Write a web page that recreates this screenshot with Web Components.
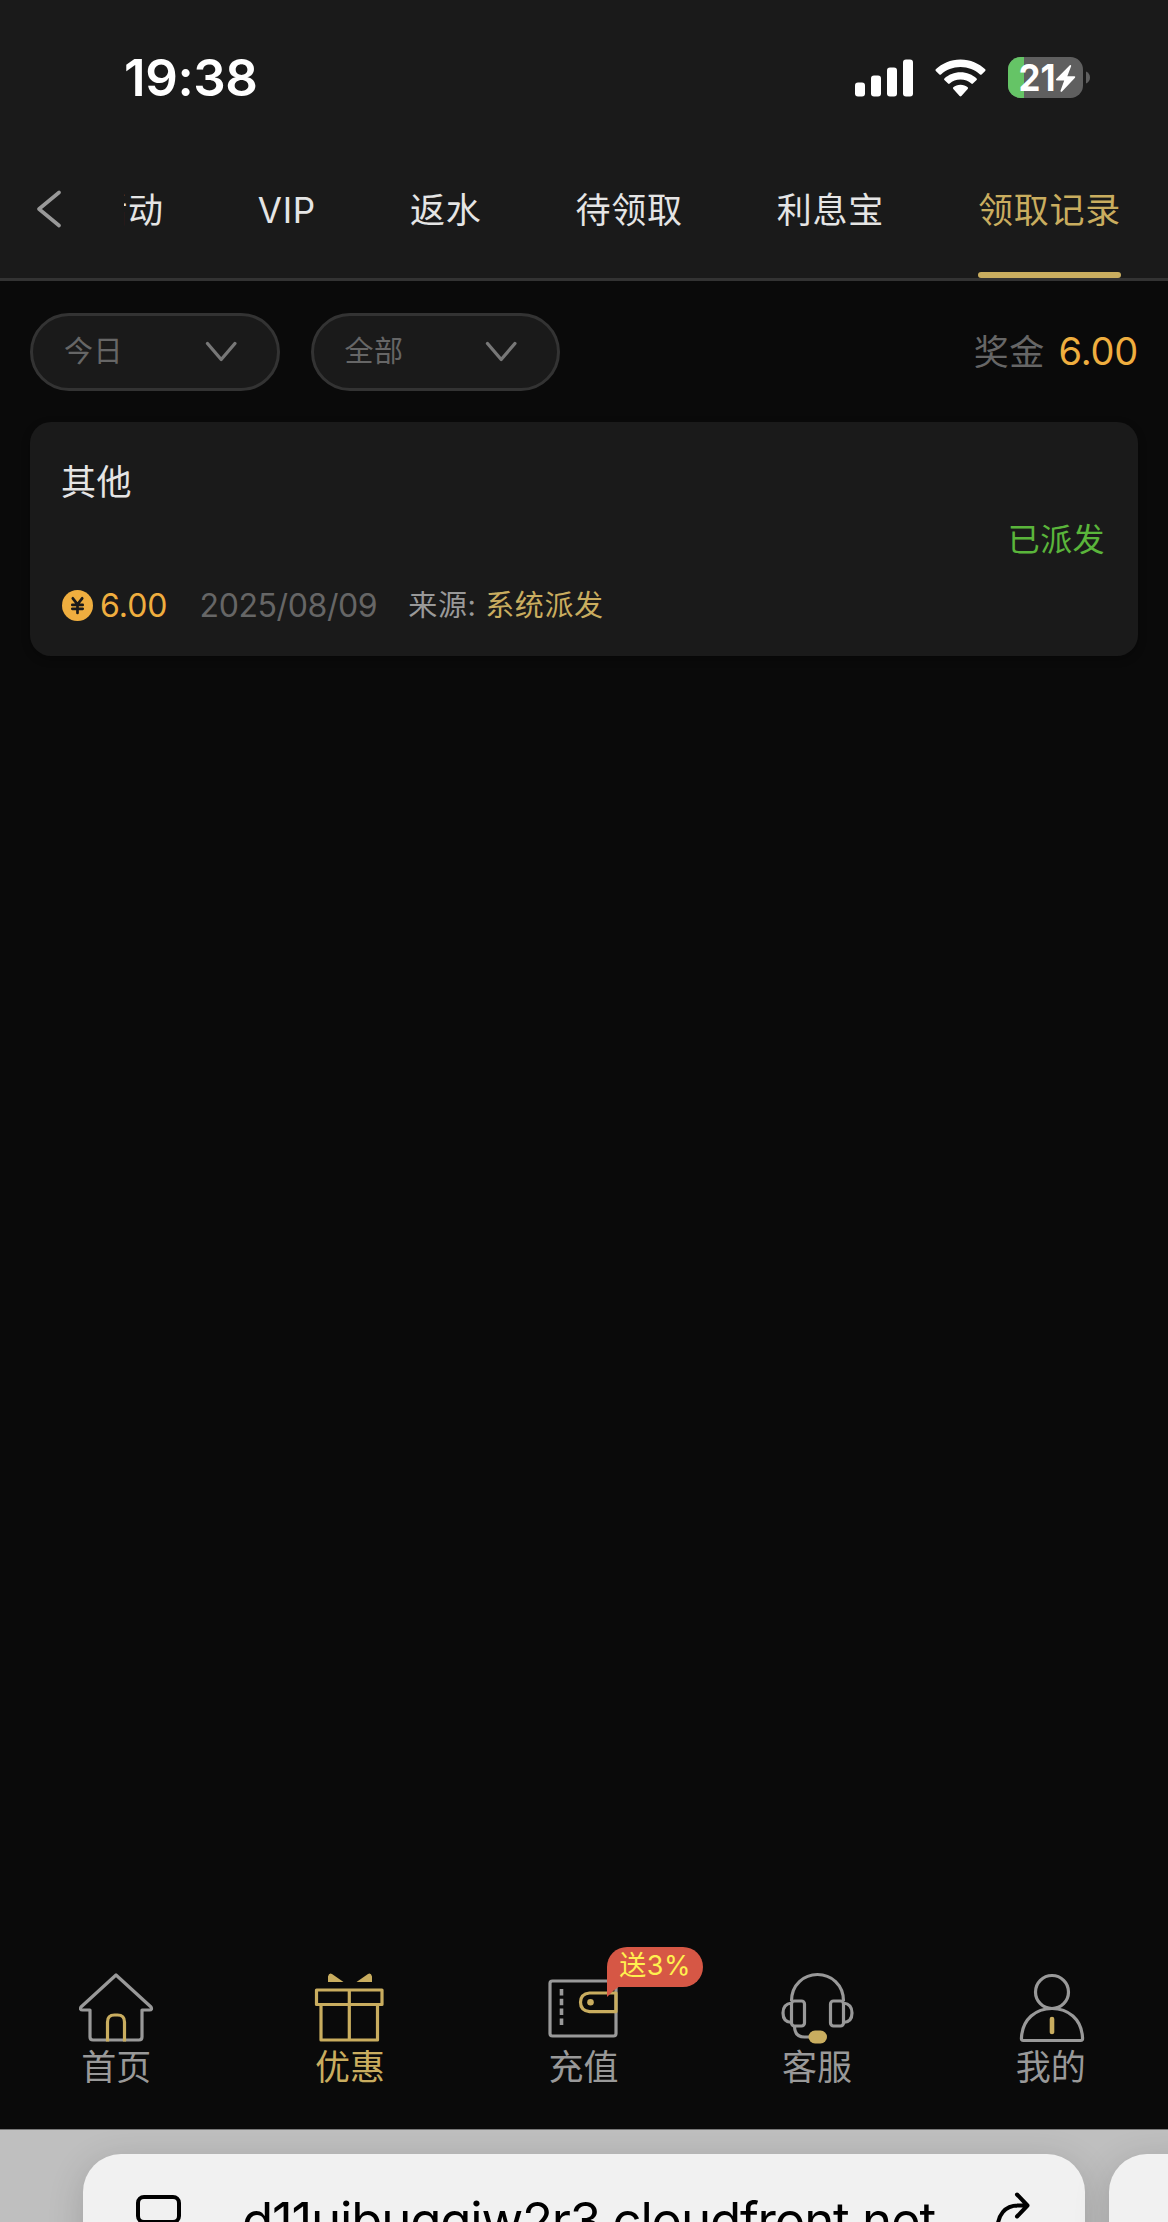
<!doctype html>
<html lang="zh-CN">
<head>
    <meta charset="utf-8" />
    <title>领取记录</title>
    <style>
        html, body {
            margin: 0;
            padding: 0;
        }
        body {
            --page: #0a0a0a;
            --panel: #1a1a1a;
            --line: #333;
            --gold: #c9ad5f;
            --amber: #efae3f;
            --muted: #666;
            --soft: #999;
            --text: #e5e5e5;
            width: 1168px;
            height: 2222px;
            overflow: hidden;
            background: var(--page);
            color: var(--text);
            font-family: Inter, "Noto Sans CJK SC", sans-serif;
        }
    </style>
</head>
<body>
    <x-app>
        <x-status-bar slot="top" time="19:38" battery="21"></x-status-bar>
        <x-tab-bar slot="top">
            <x-tab>活动</x-tab>
            <x-tab>VIP</x-tab>
            <x-tab>返水</x-tab>
            <x-tab>待领取</x-tab>
            <x-tab>利息宝</x-tab>
            <x-tab active>领取记录</x-tab>
        </x-tab-bar>

        <x-filters>
            <x-select>今日</x-select>
            <x-select>全部</x-select>
            <span slot="label">奖金</span>
            <span slot="total">6.00</span>
        </x-filters>
        <x-record>
            <span slot="title">其他</span>
            <span slot="status">已派发</span>
            <span slot="amount">6.00</span>
            <span slot="date">2025/08/09</span>
            <span slot="source">系统派发</span>
        </x-record>

        <x-nav slot="bottom">
            <x-nav-item icon="home">首页</x-nav-item>
            <x-nav-item icon="gift" active>优惠</x-nav-item>
            <x-nav-item icon="wallet">充值<x-badge slot="badge">送3%</x-badge></x-nav-item>
            <x-nav-item icon="service">客服</x-nav-item>
            <x-nav-item icon="user">我的</x-nav-item>
        </x-nav>
        <x-address-bar slot="bottom">d11uibuqqiw2r3.cloudfront.net</x-address-bar>
    </x-app>

<script>
// base class: opens a shadow root with the markup of the subclass
class Base extends HTMLElement {
    constructor () {
        super();
        this.attachShadow({mode: 'open'});
    }
    connectedCallback () {
        this.shadowRoot.innerHTML = this.render();
    }
}

customElements.define('x-app', class extends Base {
    render () {
        return `
            <style>
                :host {
                    display: flex;
                    flex-direction: column;
                    height: 2222px;
                    overflow: hidden;
                }
                main {
                    flex: 1;
                    display: flex;
                    flex-direction: column;
                    gap: 31px;
                    padding: 32px 30px 0;
                }
            </style>
            <slot name="top"></slot>
            <main><slot></slot></main>
            <slot name="bottom"></slot>`;
    }
});

customElements.define('x-status-bar', class extends Base {
    render () {
        return `
            <style>
                :host {
                    display: flex;
                    justify-content: space-between;
                    align-items: center;
                    box-sizing: border-box;
                    height: 140px;
                    padding: 16px 78px 0 124px;
                    background: var(--panel);
                    color: #fff;
                }
                .time {
                    font-size: 51px;
                    font-weight: 600;
                    letter-spacing: -0.4px;
                    line-height: 60px;
                }
                .icons {
                    display: flex;
                    align-items: center;
                    gap: 22px;
                }
                svg { display: block; }
                .battery { margin-bottom: 2px; }
            </style>
            <span class="time">${this.getAttribute('time')}</span>
            <div class="icons">
                <svg width="58" height="38" viewBox="0 0 58 38" fill="#fff">
                    <rect x="0" y="23.5" width="10" height="14" rx="3"/>
                    <rect x="16" y="16.5" width="10" height="21" rx="3"/>
                    <rect x="32" y="8.500" width="10" height="29" rx="3"/>
                    <rect x="48" y="0.5" width="10" height="37" rx="3"/>
                </svg>
                <svg width="51" height="38" viewBox="0 0 51 38" fill="#fff">
                    <path d="M25.500 .5C35.500 .5 44 4.500 50.200 10.300q.8.8 0 1.600L46.600 15.400q-.8.7-1.600 0C40 10.800 33 8 25.500 8S11 10.800 6 15.400q-.8.7-1.600 0L.8 11.900q-.8-.8 0-1.600C7 4.500 15.500.5 25.500.5z"/>
                    <path d="M25.500 13.200c6.300 0 12 2.400 16.100 6.200q.8.8 0 1.600l-3.700 3.600q-.8.7-1.600 0c-2.900-2.500-6.500-4-10.800-4s-7.900 1.500-10.800 4q-.8.7-1.600 0L9.400 21q-.8-.8 0-1.600c4.100-3.800 9.800-6.200 16.100-6.200z"/>
                    <path d="M25.500 25.700c2.900 0 5.300 1 7.200 2.600q.8.8 0 1.600L26.400 37q-.9.800-1.800 0L18.300 29.900q-.8-.8 0-1.600c1.900-1.600 4.300-2.600 7.200-2.600z"/>
                </svg>
                <svg class="battery" width="82" height="41" viewBox="0 0 82 41">
                    <clipPath id="body"><rect width="75" height="41" rx="12.500"/></clipPath>
                    <g clip-path="url(#body)">
                        <rect width="75" height="41" fill="#5f5f5f"/>
                        <rect width="16" height="41" fill="#65c466"/>
                    </g>
                    <path d="M78 14.500q4 1.800 4 6t-4 6z" fill="#5f5f5f"/>
                    <text x="10.500" y="34" font-size="37.500" font-weight="700" fill="#fff" textLength="37" lengthAdjust="spacingAndGlyphs">${this.getAttribute('battery')}</text>
                    <path d="M61.800 8.200L48.200 22q-.8 1.300.6 1.500h7.400l-3.700 10.300q0 1.700 1.500.8L67 20.800q.9-1.400-.6-1.600h-7.100L63.200 9q-.1-1.500-1.400-.8z" fill="#fff"/>
                </svg>
            </div>`;
    }
});

customElements.define('x-tab-bar', class extends Base {
    render () {
        return `
            <style>
                :host {
                    display: flex;
                    box-sizing: border-box;
                    height: 141px;
                    border-bottom: 3px solid var(--line);
                    background: var(--panel);
                }
                svg {
                    flex: none;
                    align-self: center;
                    margin-left: 36px;
                    margin-right: 62px;
                }
                /* scrolled to the last tab */
                .tabs {
                    flex: 1;
                    display: flex;
                    justify-content: flex-end;
                    gap: 94px;
                    padding-right: 47px;
                    overflow: hidden;
                }
            </style>
            <svg width="26" height="38" viewBox="0 0 26 38" fill="none" stroke="#999" stroke-width="3.600" stroke-linecap="round" stroke-linejoin="round">
                <path d="M23 2.500L3 19l20 16.500"/>
            </svg>
            <div class="tabs"><slot></slot></div>`;
    }
});

customElements.define('x-tab', class extends Base {
    render () {
        return `
            <style>
                :host {
                    flex: none;
                    display: flex;
                    flex-direction: column;
                    font-size: 35px;
                    letter-spacing: 0.75px;
                    line-height: 140px;
                    height: 138px;
                    white-space: nowrap;
                }
                :host([active]) { color: var(--gold); }
                :host([active])::after {
                    content: "";
                    flex: none;
                    height: 6px;
                    margin-top: -8px;
                    border-radius: 3px;
                    background: var(--gold);
                }
            </style>
            <slot></slot>`;
    }
});

customElements.define('x-filters', class extends Base {
    render () {
        return `
            <style>
                :host {
                    display: flex;
                    align-items: center;
                    gap: 31px;
                    height: 78px;
                }
                .sum {
                    margin-left: auto;
                    display: flex;
                    gap: 14px;
                    align-items: center;
                    font-size: 35px;
                    letter-spacing: 0.4px;
                    line-height: 60px;
                    color: var(--muted);
                }
                .total {
                    margin-top: -2px;
                    font-size: 38px;
                    letter-spacing: -0.2px;
                    color: var(--amber);
                }
            </style>
            <slot></slot>
            <div class="sum">
                <slot name="label"></slot>
                <div class="total"><slot name="total"></slot></div>
            </div>`;
    }
});

customElements.define('x-select', class extends Base {
    render () {
        return `
            <style>
                :host {
                    display: flex;
                    align-items: center;
                    justify-content: space-between;
                    box-sizing: border-box;
                    width: 249.500px;
                    height: 78px;
                    padding: 0 40px 0 31px;
                    border: 3px solid var(--line);
                    border-radius: 39px;
                    background: var(--panel);
                    color: var(--muted);
                    font-size: 29px;
                    letter-spacing: 0.5px;
                    line-height: 60px;
                }
            </style>
            <span><slot></slot></span>
            <svg width="32" height="22" viewBox="0 0 32 22" fill="none" stroke="#777" stroke-width="3.300" stroke-linecap="round" stroke-linejoin="round">
                <path d="M2.500 2.500l13.700 16 13.700-16"/>
            </svg>`;
    }
});

customElements.define('x-record', class extends Base {
    render () {
        return `
            <style>
                :host {
                    display: flex;
                    flex-direction: column;
                    box-sizing: border-box;
                    height: 234px;
                    padding: 39px 33px 0 31px;
                    border-radius: 21px;
                    background: var(--panel);
                    box-shadow: 0 3px 8px rgba(0, 0, 0, 0.3);
                }
                .title {
                    font-size: 35px;
                    letter-spacing: 0.5px;
                    line-height: 42px;
                }
                .status {
                    align-self: flex-end;
                    margin-top: 17px;
                    color: #5ab53b;
                    font-size: 32px;
                    letter-spacing: 0.4px;
                    line-height: 40px;
                }
                .row {
                    display: flex;
                    align-items: center;
                    margin-top: 25px;
                    font-size: 32px;
                    line-height: 40px;
                }
                svg { margin: -2px 0 0 1px; }
                .amount {
                    margin-left: 7px;
                    color: var(--amber);
                }
                .date {
                    margin-left: 32px;
                    color: var(--muted);
                    letter-spacing: -0.4px;
                }
                .source {
                    margin-left: 31px;
                    color: var(--soft);
                    font-size: 29px;
                    letter-spacing: 0.6px;
                    line-height: 42px;
                }
                .source b {
                    color: var(--gold);
                    font-weight: 400;
                }
            </style>
            <div class="title"><slot name="title"></slot></div>
            <div class="status"><slot name="status"></slot></div>
            <div class="row">
                <svg width="31" height="31" viewBox="0 0 31 31">
                    <circle cx="15.500" cy="15.500" r="15.500" fill="#efae3f"/>
                    <path d="M10.800 8.300l4.700 6 4.700-6M10.300 14.900h10.400M10.300 18.800h10.400M15.500 14.300v8.700" fill="none" stroke="#1a1a1a" stroke-width="2.700" stroke-linecap="round"/>
                </svg>
                <div class="amount"><slot name="amount"></slot></div>
                <div class="date"><slot name="date"></slot></div>
                <div class="source">来源: <b><slot name="source"></slot></b></div>
            </div>`;
    }
});

customElements.define('x-nav', class extends Base {
    render () {
        return `
            <style>
                :host {
                    display: grid;
                    grid-template-columns: repeat(5, 1fr);
                    box-sizing: border-box;
                    height: 179px;
                    padding-top: 20px;
                }
            </style>
            <slot></slot>`;
    }
});

// 76x76 line icons
const ICONS = {
    home: `
        <path d="M37 5L2 37q-1.500 3 1.500 3H11v27q0 3 3 3h46q3 0 3-3V40h7.500q3 0 1.500-3z"/>
        <path class="gold" d="M28.500 71.500V52q0-7 7-7h3q7 0 7 7v19.500"/>`,
    gift: `
        <path d="M4.500 20h65.500v14.500H4.500zM9 34.500v35.500h56.500V34.500M37.300 20v50"/>
        <path class="fill" d="M16 12V6.500q1-4 4-2.500L31.500 12zM60 12V6.500q-1-4-4-2.500L44.500 12z"/>`,
    wallet: `
        <rect x="4" y="11" width="66" height="55" rx="2.500"/>
        <path stroke-width="3.600" stroke-dasharray="6.500 3.300" d="M15.500 19v37"/>
        <path class="gold" d="M70 23H43.500q-9 1-9 9.300t9 9.300H70z"/>
        <circle class="dot" cx="44.500" cy="32.300" r="3.300"/>`,
    service: `
        <path d="M11.500 31C11.500 14.500 24 4.500 37.500 4.500s26 10 26 26.500"/>
        <rect x="11.500" y="31" width="13" height="25" rx="3"/>
        <rect x="50.500" y="31" width="13" height="25" rx="3"/>
        <path d="M11.500 33Q3 34 3 43t8.500 9.500M63.500 33Q72 34 72 43t-8.500 9.500M14.500 56q0 11 10 11h5"/>
        <rect class="dot" x="28.500" y="60.500" width="18.500" height="13" rx="6.500"/>`,
    user: `
        <circle cx="39" cy="22" r="16.500"/>
        <path d="M8.500 67.500C9.500 49 23 38.500 39 38.500S68.500 49 69.500 67.500q.5 3-2 3H10.500q-2.500 0-2-3z"/>
        <path class="gold" stroke-width="4.600" stroke-linecap="round" d="M39 49v13"/>`
};

customElements.define('x-nav-item', class extends Base {
    render () {
        return `
            <style>
                :host {
                    position: relative;
                    display: flex;
                    flex-direction: column;
                    align-items: center;
                    color: var(--soft);
                }
                :host([active]) { color: var(--gold); }
                svg {
                    fill: none;
                    stroke: currentColor;
                    stroke-width: 3.200;
                    stroke-linejoin: round;
                }
                .gold { stroke: var(--gold); }
                .fill { fill: currentColor; stroke: none; }
                .dot { fill: var(--gold); stroke: none; }
                .label {
                    margin-right: 1px;
                    font-size: 35px;
                    line-height: 42px;
                }
                ::slotted(x-badge) {
                    position: absolute;
                    left: 140px;
                    top: -23px;
                }
            </style>
            <svg width="76" height="76" viewBox="0 0 76 76">${ICONS[this.getAttribute('icon')]}</svg>
            <div class="label"><slot></slot></div>
            <slot name="badge"></slot>`;
    }
});

customElements.define('x-badge', class extends Base {
    render () {
        return `
            <style>
                :host {
                    display: block;
                    box-sizing: border-box;
                    width: 96px;
                    height: 40px;
                    border-radius: 20px 20px 20px 0;
                    background: #d65745;
                    color: #fff04f;
                    font-size: 27px;
                    line-height: 37px;
                    letter-spacing: 0.5px;
                    text-align: center;
                    white-space: nowrap;
                }
                svg {
                    display: block;
                    margin-top: 2px;
                }
            </style>
            <slot></slot>
            <svg width="13" height="11" viewBox="0 0 13 11"><path d="M0 0h13Q5 5 0 11z" fill="#d65745"/></svg>`;
    }
});

customElements.define('x-address-bar', class extends Base {
    render () {
        return `
            <style>
                :host {
                    display: flex;
                    gap: 24px;
                    box-sizing: border-box;
                    height: 93px;
                    padding: 24px 0 0 83px;
                    border-top: 1px solid #777;
                    overflow: hidden;
                    background: #bfbfbf;
                    color: #000;
                }
                .card {
                    flex: none;
                    display: flex;
                    justify-content: space-between;
                    box-sizing: border-box;
                    width: 1002px;
                    height: 150px;
                    padding: 37px 54px 0 52px;
                    border-radius: 38px;
                    background: #f1f1f1;
                    box-shadow: 0 8px 36px rgba(0, 0, 0, 0.16);
                }
                .url {
                    font-size: 51px;
                    line-height: 60px;
                    letter-spacing: -1.2px;
                    white-space: nowrap;
                }
            </style>
            <div class="card">
                <svg width="47" height="60" viewBox="0 0 47 60" fill="none" stroke="#000" stroke-width="4" stroke-linecap="round">
                    <rect x="3" y="6" width="41" height="25" rx="6"/>
                    <path d="M3 42h41M3 52h28"/>
                </svg>
                <span class="url"><slot></slot></span>
                <svg width="36" height="60" viewBox="0 0 36 60" fill="none" stroke="#000" stroke-width="4" stroke-linecap="round" stroke-linejoin="round">
                    <path d="M22 3.500L32.500 14.500 22 25.500M31 14.500H23C10 14.500 2.500 24 2.500 38"/>
                </svg>
            </div>
            <div class="card"></div>`;
    }
});
</script>
</body>
</html>
